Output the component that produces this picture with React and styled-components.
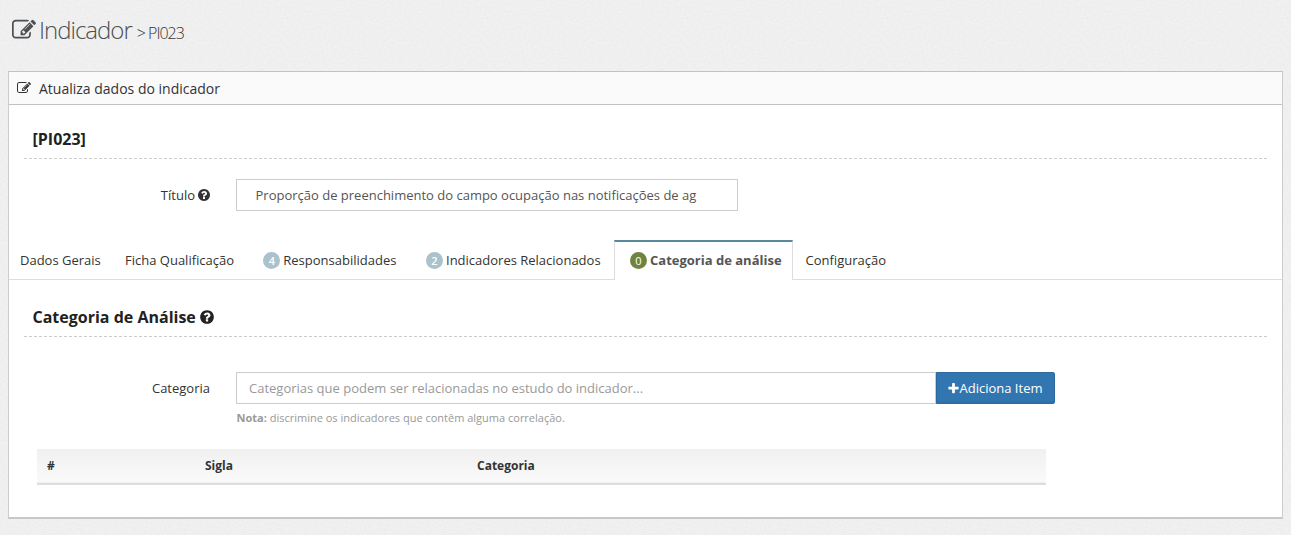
import React from "react";
import styled, { createGlobalStyle, css } from "styled-components";

const grain = encodeURIComponent(
  `<svg xmlns="http://www.w3.org/2000/svg" width="200" height="200"><filter id="n"><feTurbulence type="fractalNoise" baseFrequency=".45" numOctaves="3" stitchTiles="stitch"/><feColorMatrix values="0 0 0 0 0  0 0 0 0 0  0 0 0 0 0  .08 0 0 0 -.028"/></filter><rect width="200" height="200" filter="url(#n)" opacity=".5"/></svg>`
);

const GlobalStyle = createGlobalStyle`
  *, *::before, *::after { box-sizing: border-box; }
  body {
    margin: 0;
    min-height: 100vh;
    background: #f1f1f1 url("data:image/svg+xml,${grain}");
    color: #333;
    font: 13px/18px "Open Sans", Arial, sans-serif;
  }
  h1, h2 { margin: 0; }
`;

const Page = styled.main`
  padding: 0 8px;
`;

const Glyph = styled.svg`
  flex: none;
  width: ${(p) => p.$size}px;
  height: ${(p) => p.$size}px;
  margin: ${(p) => p.$margin || "0"};
  fill: currentColor;
`;

const PageTitle = styled.h1`
  display: flex;
  align-items: baseline;
  height: 71px;
  padding: 14px 0 0 4px;
  color: #4c4f53;
  font-size: 24px;
  font-weight: 300;
  line-height: 32px;
  letter-spacing: -1px;

  ${Glyph} {
    align-self: flex-start;
  }
`;

const TitlePath = styled.span`
  margin-left: 5px;
  color: #333;
  font-size: 16px;
`;

const Panel = styled.section`
  height: 448px;
  border: 1px solid #ccc;
  border-top-color: #c2c2c2;
  border-bottom: 2px solid #c8c8c8;
  background: #fff;
`;

const PanelHeader = styled.header`
  display: flex;
  align-items: center;
  height: 33px;
  padding: 2px 0 0 7px;
  border-bottom: 1px solid #c2c2c2;
  background: #fafafa;
  font-size: 14px;
`;

const Legend = styled.h2`
  display: flex;
  align-items: center;
  height: ${(p) => p.$height}px;
  margin: ${(p) => p.$top}px 15px 0;
  padding: 0 8.5px ${(p) => p.$bottom}px;
  border-bottom: 1px dashed #ccc;
  color: #222;
  font-size: 16px;
  font-weight: 700;
  line-height: 22px;
`;

const FormRow = styled.div`
  display: flex;
  align-items: center;
  height: 32px;
  margin-top: ${(p) => p.$top}px;
`;

const Label = styled.label`
  display: flex;
  align-items: center;
  justify-content: flex-end;
  width: 201px;
  margin-right: 26px;
`;

const Input = styled.input`
  width: ${(p) => p.$width}px;
  height: 32px;
  padding: 0 ${(p) => p.$pad}px;
  border: 1px solid #ccc;
  border-radius: 0;
  color: #555;
  background: #fff;
  font: inherit;
  &::placeholder { color: #999; opacity: 1; }
`;

const Button = styled.button`
  display: flex;
  align-items: center;
  justify-content: center;
  width: 119px;
  height: 32px;
  padding: 0 2px 0 0;
  border: 1px solid #2c699d;
  border-radius: 0 2px 2px 0;
  background: #3276b1;
  box-shadow: inset 0 -2px 0 rgba(0, 0, 0, 0.05);
  color: #fff;
  font: inherit;
`;

const Note = styled.p`
  margin: 5px 0 0 227.5px;
  color: #999;
  font-size: 11px;
`;

const Tabs = styled.nav`
  display: flex;
  height: 40px;
  margin-top: 29px;
  box-shadow: inset 0 -1px 0 #ddd;
`;

const Tab = styled.div`
  display: flex;
  align-items: center;
  width: ${(p) => p.$width}px;
  padding: 0 0 0 ${(p) => p.$pad}px;
  white-space: nowrap;
  ${(p) =>
    p.$active &&
    css`
      padding-bottom: 2px;
      border: 1px solid #ddd;
      border-top: 2px solid #57889c;
      border-bottom: 0;
      background: #fff;
      color: #555;
      font-weight: 700;
    `}
`;

const Badge = styled.span`
  width: 17px;
  height: 17px;
  margin-right: 3px;
  border-radius: 50%;
  background: ${(p) => (p.$active ? "#71843f" : "#a9c2cc")};
  color: #fff;
  font-size: 11px;
  font-weight: ${(p) => (p.$active ? 400 : 600)};
  line-height: 17px;
  text-align: center;
`;

const Table = styled.table`
  width: 1009px;
  margin: 22px 0 0 28px;
  border-collapse: collapse;
  table-layout: fixed;
`;

const HeadRow = styled.tr`
  height: 35px;
  border-bottom: 2px solid #ddd;
  background: linear-gradient(#f0f0f0, #fafafa);
`;

const HeadCell = styled.th`
  width: ${(p) => p.$width}px;
  padding: 0 10px;
  font-size: 12px;
  text-align: left;
`;

const PATHS = {
  edit: "M888 1184l116-116-152-152-116 116v56h96v96h56zm440-720q-16-16-33 1l-350 350q-17 17-1 33t33-1l350-350q17-17 1-33zm80 594v190q0 119-84.5 203.5t-203.5 84.5h-832q-119 0-203.5-84.5t-84.5-203.5v-832q0-119 84.5-203.5t203.5-84.5h832q63 0 117 25 15 7 18 23 3 17-9 29l-49 49q-14 14-32 8-23-6-45-6h-832q-66 0-113 47t-47 113v832q0 66 47 113t113 47h832q66 0 113-47t47-113v-126q0-13 9-22l64-64q15-15 35-7t20 29zm-96-738l288 288-672 672h-288v-288zm444 132l-92 92-288-288 92-92q28-28 68-28t68 28l152 152q28 28 28 68t-28 68z",
  help: "M1024 1376v-192q0-14-9-23t-23-9h-192q-14 0-23 9t-9 23v192q0 14 9 23t23 9h192q14 0 23-9t9-23zm256-672q0-88-55.5-163t-138.5-116-170-41q-243 0-371 213-15 24 8 42l132 100q7 6 19 6 16 0 25-12 53-68 86-92 34-24 86-24 48 0 85.5 26t37.5 59q0 38-20 61t-68 45q-63 28-115.5 86.5t-52.5 125.5v36q0 14 9 23t23 9h192q14 0 23-9t9-23q0-19 21.5-49.5t54.5-49.5q32-18 49-28.5t46-35 44.5-48 28-60.5 12.5-81zm384 192q0 209-103 385.5t-279.5 279.5-385.5 103-385.5-103-279.5-279.5-103-385.5 103-385.5 279.5-279.5 385.5-103 385.5 103 279.5 279.5 103 385.5z",
  plus: "M1600 736v192q0 40-28 68t-68 28h-416v416q0 40-28 68t-68 28h-192q-40 0-68-28t-28-68v-416h-416q-40 0-68-28t-28-68v-192q0-40 28-68t68-28h416v-416q0-40 28-68t68-28h192q40 0 68 28t28 68v416h416q40 0 68 28t28 68z",
};

function Icon({ name, size, margin }) {
  return (
    <Glyph viewBox="0 0 1792 1792" $size={size} $margin={margin} aria-hidden="true">
      <path d={PATHS[name]} />
    </Glyph>
  );
}

const TABS = [
  { label: "Dados Gerais", width: 104, pad: 11 },
  { label: "Ficha Qualificação", width: 137, pad: 12 },
  { label: "Responsabilidades", width: 163, pad: 13.3, count: 4 },
  { label: "Indicadores Relacionados", width: 201, pad: 13, count: 2 },
  { label: "Categoria de análise", width: 179, pad: 15, count: 0, active: true },
  { label: "Configuração", width: 110, pad: 12.5 },
];

export default function App() {
  return (
    <>
      <GlobalStyle />
      <Page>
        <PageTitle>
          <Icon name="edit" size={24} margin="4px 3px 0 0" />
          Indicador
          <TitlePath>&gt; PI023</TitlePath>
        </PageTitle>
        <Panel>
          <PanelHeader>
            <Icon name="edit" size={14} margin="0 8px 2px 1px" />
            Atualiza dados do indicador
          </PanelHeader>
          <Legend $top={20} $height={34} $bottom={5}>[PI023]</Legend>
          <FormRow $top={20}>
            <Label>
              Título
              <Icon name="help" size={14} margin="0 -1px 0 2px" />
            </Label>
            <Input
              $width={502}
              $pad={18.5}
              readOnly
              value="Proporção de preenchimento do campo ocupação nas notificações de ag"
            />
          </FormRow>
          <Tabs>
            {TABS.map((t) => (
              <Tab key={t.label} $width={t.width} $pad={t.pad} $active={t.active}>
                {t.count !== undefined && <Badge $active={t.active}>{t.count}</Badge>}
                {t.label}
              </Tab>
            ))}
          </Tabs>
          <Legend $top={22} $height={35} $bottom={5}>
            Categoria de Análise
            <Icon name="help" size={16} margin="0 0 0 3px" />
          </Legend>
          <FormRow $top={35}>
            <Label>Categoria</Label>
            <Input
              $width={700}
              $pad={12}
              placeholder="Categorias que podem ser relacionadas no estudo do indicador..."
            />
            <Button type="button">
              <Icon name="plus" size={13} />
              Adiciona Item
            </Button>
          </FormRow>
          <Note>
            <strong>Nota:</strong> discrimine os indicadores que contêm alguma correlação.
          </Note>
          <Table>
            <thead>
              <HeadRow>
                <HeadCell $width={158}>#</HeadCell>
                <HeadCell $width={272}>Sigla</HeadCell>
                <HeadCell $width={579}>Categoria</HeadCell>
              </HeadRow>
            </thead>
          </Table>
        </Panel>
      </Page>
    </>
  );
}
